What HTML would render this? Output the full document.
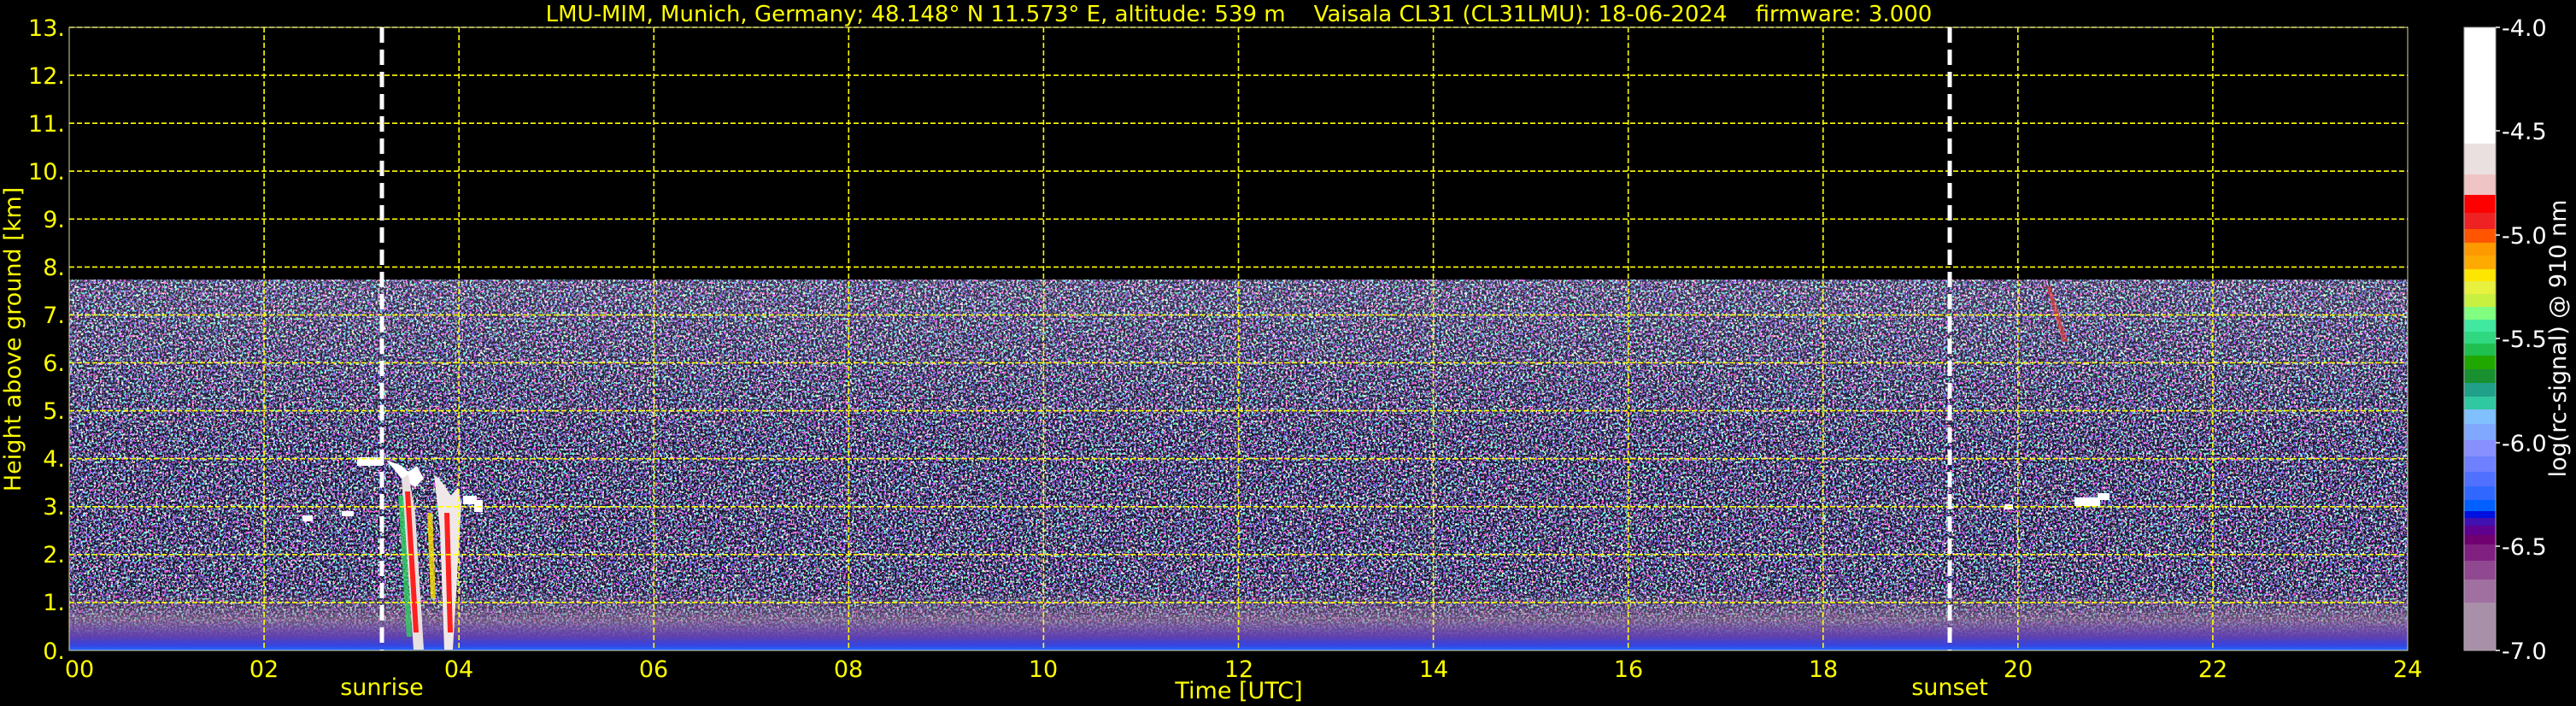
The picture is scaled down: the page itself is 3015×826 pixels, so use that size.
<!DOCTYPE html>
<html><head><meta charset="utf-8"><style>
html,body{margin:0;padding:0;background:#000;}
svg{display:block;}
text{font-family:"DejaVu Sans","Liberation Sans",sans-serif;}
</style></head><body>
<svg width="3015" height="826" viewBox="0 0 3015 826" xmlns="http://www.w3.org/2000/svg">
<defs>
<filter id="nz" x="0" y="0" width="100%" height="100%" filterUnits="objectBoundingBox" color-interpolation-filters="sRGB">
<feTurbulence type="fractalNoise" baseFrequency="0.4" numOctaves="2" seed="7" result="t"/>
<feColorMatrix in="t" type="matrix" values="5 0 0 0 -2  0 5 0 0 -2  0 0 5 0 -2  0 0 0 6 -2.6" result="c"/>
<feComponentTransfer in="c">
<feFuncR type="discrete" tableValues="0.35 0.45 0.55 0.4 0.9 1"/>
<feFuncG type="discrete" tableValues="0.3 0.45 0.6 0.5 0.85 1"/>
<feFuncB type="discrete" tableValues="0.7 1 0.9 0.6 1 1"/>
<feFuncA type="discrete" tableValues="0 0 0.5 1 1 1"/>
</feComponentTransfer>
</filter>
<linearGradient id="bl" x1="0" y1="0" x2="0" y2="1">
<stop offset="0" stop-color="#8a6a96" stop-opacity="0"/>
<stop offset="0.5" stop-color="#9a78a0" stop-opacity="0.6"/>
<stop offset="0.78" stop-color="#7a2a86" stop-opacity="0.95"/>
<stop offset="0.92" stop-color="#4020c0"/>
<stop offset="1" stop-color="#1860ff"/>
</linearGradient>
<linearGradient id="bl2" x1="0" y1="0" x2="0" y2="1">
<stop offset="0" stop-color="#3060ff" stop-opacity="0"/>
<stop offset="1" stop-color="#2a6cff" stop-opacity="0.6"/>
</linearGradient>
<linearGradient id="top" x1="0" y1="0" x2="0" y2="1">
<stop offset="0" stop-color="#ffffff" stop-opacity="0.12"/>
<stop offset="1" stop-color="#ffffff" stop-opacity="0"/>
</linearGradient>
</defs>

<!-- data area -->
<rect x="81" y="327" width="2737" height="434" fill="#1e1a34"/>
<rect x="81" y="327" width="2737" height="434" filter="url(#nz)"/>
<rect x="81" y="327" width="2737" height="200" fill="url(#top)"/>
<rect x="81" y="690" width="2737" height="71" fill="url(#bl)"/>
<rect x="81" y="725" width="2737" height="36" fill="url(#bl2)"/>

<!-- cloud features -->
<g>
<rect x="418" y="535" width="30" height="10" fill="#fff"/>
<path d="M452 538 L470 545 L478 552 L488 545 L496 560 L486 570 L470 560 Z" fill="#fff"/>
<path d="M470 560 L478 555 L486 600 L496 760 L484 760 Z" fill="#e8e0e0"/>
<path d="M474 575 L480 575 L490 740 L484 740 Z" fill="#ff2020"/>
<path d="M466 580 L472 580 L482 745 L476 745 Z" fill="#30d060" opacity="0.8"/>
<path d="M508 555 L518 565 L528 580 L536 570 L540 590 L530 760 L520 760 L515 620 Z" fill="#f0e8e8"/>
<path d="M520 600 L526 600 L530 740 L524 740 Z" fill="#ff2020"/>
<path d="M500 600 L506 600 L510 700 L504 700 Z" fill="#ffe000" opacity="0.8"/>
<rect x="542" y="580" width="16" height="10" fill="#fff"/>
<rect x="555" y="585" width="10" height="14" fill="#fff"/>
<rect x="354" y="603" width="12" height="7" fill="#fff"/>
<rect x="400" y="598" width="14" height="6" fill="#fff"/>
<rect x="2346" y="590" width="10" height="6" fill="#fff"/>
<rect x="2428" y="582" width="30" height="10" fill="#fff"/>
<rect x="2455" y="577" width="14" height="8" fill="#fff"/>
<path d="M2395 335 L2400 335 L2420 400 L2414 400 Z" fill="#e04040" opacity="0.7"/>
</g>

<!-- grid -->
<g stroke="#ffff00" stroke-width="1.6" stroke-dasharray="6,3" fill="none">
<line x1="81" y1="32" x2="2818" y2="32"/>
<line x1="81" y1="88.1" x2="2818" y2="88.1"/>
<line x1="81" y1="144.2" x2="2818" y2="144.2"/>
<line x1="81" y1="200.2" x2="2818" y2="200.2"/>
<line x1="81" y1="256.3" x2="2818" y2="256.3"/>
<line x1="81" y1="312.4" x2="2818" y2="312.4"/>
<line x1="81" y1="368.5" x2="2818" y2="368.5"/>
<line x1="81" y1="424.5" x2="2818" y2="424.5"/>
<line x1="81" y1="480.6" x2="2818" y2="480.6"/>
<line x1="81" y1="536.7" x2="2818" y2="536.7"/>
<line x1="81" y1="592.8" x2="2818" y2="592.8"/>
<line x1="81" y1="648.8" x2="2818" y2="648.8"/>
<line x1="81" y1="704.9" x2="2818" y2="704.9"/>
<line x1="309.1" y1="32" x2="309.1" y2="761"/>
<line x1="537.2" y1="32" x2="537.2" y2="761"/>
<line x1="765.3" y1="32" x2="765.3" y2="761"/>
<line x1="993.3" y1="32" x2="993.3" y2="761"/>
<line x1="1221.4" y1="32" x2="1221.4" y2="761"/>
<line x1="1449.5" y1="32" x2="1449.5" y2="761"/>
<line x1="1677.6" y1="32" x2="1677.6" y2="761"/>
<line x1="1905.7" y1="32" x2="1905.7" y2="761"/>
<line x1="2133.8" y1="32" x2="2133.8" y2="761"/>
<line x1="2361.8" y1="32" x2="2361.8" y2="761"/>
<line x1="2589.9" y1="32" x2="2589.9" y2="761"/>
</g>
<rect x="81" y="32" width="2737" height="729" fill="none" stroke="#d8d8a0" stroke-width="1"/>

<!-- sunrise/sunset -->
<g stroke="#fff" stroke-width="5" stroke-dasharray="18,8">
<line x1="447" y1="32" x2="447" y2="761"/>
<line x1="2282" y1="32" x2="2282" y2="761"/>
</g>

<!-- title -->
<text x="1450" y="25" fill="#ffff00" font-size="26" text-anchor="middle" xml:space="preserve">LMU-MIM, Munich, Germany; 48.148° N 11.573° E, altitude: 539 m    Vaisala CL31 (CL31LMU): 18-06-2024    firmware: 3.000</text>

<!-- y tick labels -->
<g fill="#ffff00" font-size="27" text-anchor="end">
<text x="76" y="42">13.</text>
<text x="76" y="98">12.</text>
<text x="76" y="154">11.</text>
<text x="76" y="210">10.</text>
<text x="76" y="266">9.</text>
<text x="76" y="322">8.</text>
<text x="76" y="378">7.</text>
<text x="76" y="434">6.</text>
<text x="76" y="490">5.</text>
<text x="76" y="546">4.</text>
<text x="76" y="602">3.</text>
<text x="76" y="658">2.</text>
<text x="76" y="714">1.</text>
<text x="76" y="771">0.</text>
</g>
<text transform="translate(24,397) rotate(-90)" fill="#ffff00" font-size="27" text-anchor="middle">Height above ground [km]</text>

<!-- x tick labels -->
<g fill="#ffff00" font-size="27" text-anchor="middle">
<text x="93" y="792">00</text>
<text x="309" y="792">02</text>
<text x="537" y="792">04</text>
<text x="765" y="792">06</text>
<text x="993" y="792">08</text>
<text x="1221" y="792">10</text>
<text x="1450" y="792">12</text>
<text x="1678" y="792">14</text>
<text x="1906" y="792">16</text>
<text x="2134" y="792">18</text>
<text x="2362" y="792">20</text>
<text x="2590" y="792">22</text>
<text x="2818" y="792">24</text>
<text x="447" y="813">sunrise</text>
<text x="1450" y="817">Time [UTC]</text>
<text x="2282" y="813">sunset</text>
</g>

<!-- colorbar -->
<g shape-rendering="crispEdges">
<rect x="2884" y="32" width="37" height="136" fill="#ffffff"/>
<rect x="2884" y="168" width="37" height="36" fill="#ebe0e0"/>
<rect x="2884" y="204" width="37" height="24" fill="#efc4c4"/>
<rect x="2884" y="228" width="37" height="21" fill="#ff0000"/>
<rect x="2884" y="249" width="37" height="19" fill="#ee2222"/>
<rect x="2884" y="268" width="37" height="16" fill="#ff5500"/>
<rect x="2884" y="284" width="37" height="15" fill="#ff9900"/>
<rect x="2884" y="299" width="37" height="16" fill="#ffaa00"/>
<rect x="2884" y="315" width="37" height="14" fill="#ffe600"/>
<rect x="2884" y="329" width="37" height="15" fill="#e8f040"/>
<rect x="2884" y="344" width="37" height="15" fill="#c8f040"/>
<rect x="2884" y="359" width="37" height="15" fill="#80ff80"/>
<rect x="2884" y="374" width="37" height="14" fill="#40e8a0"/>
<rect x="2884" y="388" width="37" height="14" fill="#30d880"/>
<rect x="2884" y="402" width="37" height="14" fill="#20c050"/>
<rect x="2884" y="416" width="37" height="16" fill="#20a800"/>
<rect x="2884" y="432" width="37" height="16" fill="#189030"/>
<rect x="2884" y="448" width="37" height="16" fill="#20a088"/>
<rect x="2884" y="464" width="37" height="15" fill="#30c8a0"/>
<rect x="2884" y="479" width="37" height="17" fill="#80c0ff"/>
<rect x="2884" y="496" width="37" height="19" fill="#80a8ff"/>
<rect x="2884" y="515" width="37" height="19" fill="#8890ff"/>
<rect x="2884" y="534" width="37" height="18" fill="#6e80ff"/>
<rect x="2884" y="552" width="37" height="17" fill="#5070ff"/>
<rect x="2884" y="569" width="37" height="16" fill="#3068ff"/>
<rect x="2884" y="585" width="37" height="13" fill="#0060ff"/>
<rect x="2884" y="598" width="37" height="8" fill="#0010e0"/>
<rect x="2884" y="606" width="37" height="9" fill="#4010b0"/>
<rect x="2884" y="615" width="37" height="11" fill="#600090"/>
<rect x="2884" y="626" width="37" height="11" fill="#700070"/>
<rect x="2884" y="637" width="37" height="19" fill="#802080"/>
<rect x="2884" y="656" width="37" height="22" fill="#904890"/>
<rect x="2884" y="678" width="37" height="27" fill="#a070a0"/>
<rect x="2884" y="705" width="37" height="56" fill="#a890a8"/>
</g>
<rect x="2884" y="32" width="37" height="729" fill="none" stroke="#aaaaaa" stroke-width="1"/>
<g stroke="#fff" stroke-width="1.5">
<line x1="2921" y1="32" x2="2926" y2="32"/>
<line x1="2921" y1="153" x2="2926" y2="153"/>
<line x1="2921" y1="275" x2="2926" y2="275"/>
<line x1="2921" y1="396" x2="2926" y2="396"/>
<line x1="2921" y1="518" x2="2926" y2="518"/>
<line x1="2921" y1="639" x2="2926" y2="639"/>
<line x1="2921" y1="761" x2="2926" y2="761"/>
</g>
<g fill="#fff" font-size="27">
<text x="2928" y="42">-4.0</text>
<text x="2928" y="163">-4.5</text>
<text x="2928" y="285">-5.0</text>
<text x="2928" y="406">-5.5</text>
<text x="2928" y="528">-6.0</text>
<text x="2928" y="649">-6.5</text>
<text x="2928" y="771">-7.0</text>
</g>
<text transform="translate(3003,396) rotate(-90)" fill="#fff" font-size="27" text-anchor="middle">log(rc-signal) @ 910 nm</text>
</svg>
</body></html>
